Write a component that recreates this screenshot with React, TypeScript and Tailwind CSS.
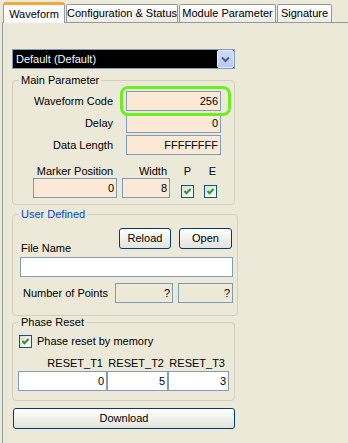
import type { ReactNode } from "react";

const FONT = "font-['Liberation_Sans',Arial,sans-serif]";

function Tab({ label, active, width }: { label: string; active?: boolean; width: string }) {
  if (active) {
    return (
      <div
        className={`${width} relative z-10 -mb-px flex h-[21px] items-center justify-center whitespace-nowrap rounded-t-[3px] border-x border-t-[3px] border-x-[#919B9C] border-t-[#F2A93B] bg-[#FCFCFE] text-black`}
      >
        {label}
      </div>
    );
  }
  return (
    <div
      className={`${width} flex h-[18px] items-center justify-center whitespace-nowrap rounded-t-[2px] border-x border-t border-[#919B9C] bg-gradient-to-b from-white to-[#ECEBE6] text-black`}
    >
      {label}
    </div>
  );
}

function Field({ value, className, tone = "peach" }: { value: string; className: string; tone?: "peach" | "white" | "flat" }) {
  const bg = tone === "peach" ? "bg-[#FBE8D5]" : tone === "white" ? "bg-white" : "bg-[#ECE9D8]";
  return (
    <input
      readOnly
      value={value}
      className={`${className} ${bg} h-[20px] border border-[#7F9DB9] pr-[2px] text-right text-black outline-none`}
    />
  );
}

function Check() {
  return (
    <span className="flex h-[13px] w-[13px] shrink-0 items-center justify-center border border-[#1C5180] bg-gradient-to-br from-[#DCDCD7] to-white">
      <svg width="11" height="11" viewBox="0 0 11 11">
        <polyline points="2.5,5 4.5,7.2 8.5,3" fill="none" stroke="#21A121" strokeWidth="2" />
      </svg>
    </span>
  );
}

function XpButton({ children, className }: { children: ReactNode; className: string }) {
  return (
    <button
      type="button"
      className={`${className} flex h-[21px] items-center justify-center rounded-[3px] border border-[#003C74] bg-gradient-to-b from-white to-[#E3E3DB] text-black`}
    >
      {children}
    </button>
  );
}

function Group({ title, blue, className, children }: { title: string; blue?: boolean; className: string; children: ReactNode }) {
  return (
    <fieldset className={`${className} rounded-[4px] border border-[#D0D0BF]`}>
      <legend className={`ml-[6px] px-[2px] leading-[13px] ${blue ? "text-[#0046D5]" : "text-black"}`}>{title}</legend>
      {children}
    </fieldset>
  );
}

export default function App() {
  return (
    <div className={`${FONT} relative h-[443px] w-[348px] overflow-hidden bg-[#ECE9D8] text-[11px] leading-[13px] text-black`}>
      {/* tab strip */}
      <div className="flex h-[22px] items-end gap-px pl-[3px]">
        <Tab label="Waveform" active width="w-[62px]" />
        <Tab label="Configuration & Status" width="w-[112px]" />
        <Tab label="Module Parameter" width="w-[97px]" />
        <Tab label="Signature" width="w-[55px]" />
      </div>

      <div className="ml-[2px] h-[421px] border-l border-t border-[#919B9C] pl-[9px] pt-[26px]">
        {/* combo box */}
        <div className="flex h-[20px] w-[223px] border border-[#7F9DB9] bg-black">
          <div className="flex flex-1 items-center pl-[3px] text-[#F0FFFF]">Default (Default)</div>
          <div className="flex w-[17px] items-center justify-center rounded-[2px] border border-[#E6EEFC] bg-gradient-to-b from-[#CEDBFA] to-[#B6C9F6]">
            <svg width="9" height="7" viewBox="0 0 9 7">
              <polyline points="1,1.5 4.5,5 8,1.5" fill="none" stroke="#4D6185" strokeWidth="2" />
            </svg>
          </div>
        </div>

        <Group title="Main Parameter" className="mt-[5px] w-[223px] pb-[6px] pt-[4px]">
          {[
            ["Waveform Code", "256"],
            ["Delay", "0"],
            ["Data Length", "FFFFFFFF"],
          ].map(([label, value], i) => (
            <div key={label} className={`flex h-[20px] items-center ${i > 0 ? "mt-[2px]" : ""}`}>
              <span className="w-[100px] text-right">{label}</span>
              <Field value={value} className="ml-[13px] w-[95px]" />
            </div>
          ))}
          <div className="mt-[10px] flex h-[13px]">
            <span className="ml-[20px] w-[84px] text-center">Marker Position</span>
            <span className="ml-[5px] w-[48px] pr-[3px] text-right">Width</span>
            <span className="ml-[11px] w-[13px] text-center">P</span>
            <span className="ml-[11px] w-[15px] text-center">E</span>
          </div>
          <div className="flex items-end">
            <Field value="0" className="ml-[20px] w-[84px]" />
            <Field value="8" className="ml-[5px] w-[48px]" />
            <span className="ml-[11px]">
              <Check />
            </span>
            <span className="ml-[10px]">
              <Check />
            </span>
          </div>
        </Group>

        <Group title="User Defined" blue className="mt-[3px] w-[226px] pb-[12px] pt-[7px]">
          <div className="flex h-[27px]">
            <span className="ml-[8px] self-end">File Name</span>
            <div className="ml-auto mr-[5px] flex gap-[8px] self-start">
              <XpButton className="w-[52px]">Reload</XpButton>
              <XpButton className="w-[53px]">Open</XpButton>
            </div>
          </div>
          <Field value="" tone="white" className="ml-[7px] mt-[2px] w-[213px]" />
          <div className="mt-[6px] flex items-center">
            <span className="ml-[10px] w-[92px]">Number of Points</span>
            <Field value="?" tone="flat" className="w-[58px]" />
            <Field value="?" tone="flat" className="ml-[5px] w-[55px]" />
          </div>
        </Group>

        <Group title="Phase Reset" className="w-[223px] pb-[9px] pt-[6px]">
          <div className="ml-[6px] flex h-[13px] items-center gap-[5px]">
            <Check />
            <span>Phase reset by memory</span>
          </div>
          <div className="ml-[5px] mt-[9px] flex h-[13px]">
            <span className="w-[89px] pr-[4px] text-right">RESET_T1</span>
            <span className="w-[61px] pr-[4px] text-right">RESET_T2</span>
            <span className="w-[61px] pr-[4px] text-right">RESET_T3</span>
          </div>
          <div className="ml-[5px] mt-[1px] flex">
            <Field value="0" tone="white" className="w-[89px]" />
            <Field value="5" tone="white" className="w-[61px]" />
            <Field value="3" tone="white" className="w-[61px]" />
          </div>
        </Group>

        <XpButton className="ml-[1px] mt-[7px] w-[222px]">Download</XpButton>
      </div>

      {/* annotation highlight around Waveform Code */}
      <div className="pointer-events-none absolute left-[120px] top-[86px] h-[30px] w-[111px] rounded-[8px] border-[3px] border-[#6BF01E]" />
    </div>
  );
}
